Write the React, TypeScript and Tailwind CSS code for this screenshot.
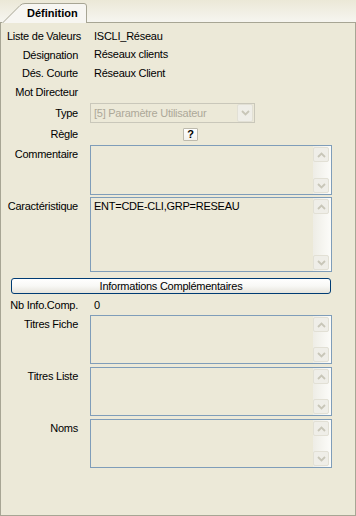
import React from "react";

const ScrollBtn = ({ down }: { down?: boolean }) => (
  <div className="w-[16px] h-[15px] rounded-[2px] border border-[#e2e0d5] bg-[#efeee8] flex items-center justify-center">
    <svg width="9" height="6" viewBox="0 0 9 6">
      <path
        d={down ? "M1 1 L4.5 4.5 L8 1" : "M1 5 L4.5 1.5 L8 5"}
        stroke="#c8c6b8"
        strokeWidth="1.8"
        fill="none"
      />
    </svg>
  </div>
);

const Area = ({ h, text }: { h: string; text?: string }) => (
  <div className={`flex border border-[#7f9db9] bg-[#ece9d8] w-[242px] ${h}`}>
    <div className="flex-1 pl-[3px] pt-[2px] leading-[13px] whitespace-nowrap">{text}</div>
    <div className="w-[18px] flex flex-col justify-between py-px pr-px bg-gradient-to-r from-[#eeede6] to-[#fcfcf9]">
      <ScrollBtn />
      <ScrollBtn down />
    </div>
  </div>
);

const Label = ({ children, left }: { children: React.ReactNode; left?: boolean }) => (
  <div
    className={`w-[77px] shrink-0 whitespace-nowrap h-[18px] leading-[18px] ${
      left ? "text-left pl-[6px]" : "text-right"
    }`}
  >
    {children}
  </div>
);

export default function App() {
  return (
    <div className="w-[356px] h-[516px] flex flex-col bg-[#ece9d8] text-[11px] tracking-[-0.25px] text-black font-['Liberation_Sans',Arial,sans-serif]">
      {/* header with tab */}
      <div className="h-[23px] flex shrink-0 bg-gradient-to-b from-[#ebe8d7] to-[#f7f6f1]">
        <div className="w-[2px] h-full border-b border-[#a7a594]" />
        <div className="relative w-[85px] h-full">
          <svg className="absolute inset-0" width="85" height="23" viewBox="0 0 85 23">
            <path
              d="M0.5 23 L18 5.5 Q20 3.5 23 3.5 L82 3.5 Q84.5 3.5 84.5 6 L84.5 23 Z"
              fill="#f7f6f2"
              stroke="none"
            />
            <path
              d="M0.5 23 L18 5.5 Q20 3.5 23 3.5 L82 3.5 Q84.5 3.5 84.5 6 L84.5 23"
              fill="none"
              stroke="#a7a594"
              strokeWidth="1"
            />
          </svg>
          <div className="relative pl-[25px] pt-[6px] font-bold leading-[14px] tracking-normal">Définition</div>
        </div>
        <div className="flex-1 h-full border-b border-[#a7a594]" />
      </div>

      {/* body */}
      <div className="flex-1 flex flex-col border-x border-b border-[#a7a594] pt-[4px]">
        <div className="flex h-[18px] items-center">
          <Label left>Liste de Valeurs</Label>
          <div className="ml-[12px] pl-[4px]">ISCLI_Réseau</div>
        </div>
        <div className="flex h-[19px] items-center">
          <Label>Désignation</Label>
          <div className="ml-[12px] pl-[4px]">Réseaux clients</div>
        </div>
        <div className="flex h-[18px] items-center">
          <Label>Dés. Courte</Label>
          <div className="ml-[12px] pl-[4px]">Réseaux Client</div>
        </div>
        <div className="flex h-[19px] items-center">
          <Label>Mot Directeur</Label>
        </div>

        <div className="flex h-[20px] mt-[2px] items-center">
          <Label>Type</Label>
          <div className="ml-[12px] w-[165px] h-[20px] border border-[#c9c7ba] bg-[#ece9d8] flex items-center">
            <span className="flex-1 pl-[3px] text-[#aca899] whitespace-nowrap">[5] Paramètre Utilisateur</span>
            <div className="w-[16px] h-[18px] mr-px rounded-[2px] border border-[#e2e0d5] bg-[#efeee8] flex items-center justify-center">
              <svg width="9" height="6" viewBox="0 0 9 6">
                <path d="M1 1 L4.5 4.5 L8 1" stroke="#c8c6b8" strokeWidth="1.8" fill="none" />
              </svg>
            </div>
          </div>
        </div>

        <div className="flex h-[18px] mt-[2px] items-center">
          <Label>Règle</Label>
          <div className="ml-[105px] w-[15px] h-[13px] border border-[#bdbaad] bg-gradient-to-b from-white to-[#f3f2ec] rounded-[1px] flex items-center justify-center font-bold leading-none">
            ?
          </div>
        </div>

        <div className="flex mt-[2px]">
          <Label>Commentaire</Label>
          <div className="ml-[12px]">
            <Area h="h-[50px]" />
          </div>
        </div>

        <div className="flex mt-[2px]">
          <Label>Caractéristique</Label>
          <div className="ml-[12px]">
            <Area h="h-[75px]" text="ENT=CDE-CLI,GRP=RESEAU" />
          </div>
        </div>

        <div className="ml-[10px] mt-[6px] w-[320px] h-[16px] border border-[#003c74] rounded-[3px] bg-gradient-to-b from-white via-[#f8f8f5] to-[#e6e4dc] flex items-center justify-center leading-none">
          Informations Complémentaires
        </div>

        <div className="flex h-[18px] mt-[2px] items-center">
          <Label>Nb Info.Comp.</Label>
          <div className="ml-[12px] pl-[4px]">0</div>
        </div>

        <div className="flex mt-[1px]">
          <Label>Titres Fiche</Label>
          <div className="ml-[12px]">
            <Area h="h-[49px]" />
          </div>
        </div>

        <div className="flex mt-[3px]">
          <Label>Titres Liste</Label>
          <div className="ml-[12px]">
            <Area h="h-[49px]" />
          </div>
        </div>

        <div className="flex mt-[3px]">
          <Label>Noms</Label>
          <div className="ml-[12px]">
            <Area h="h-[49px]" />
          </div>
        </div>
      </div>
    </div>
  );
}
